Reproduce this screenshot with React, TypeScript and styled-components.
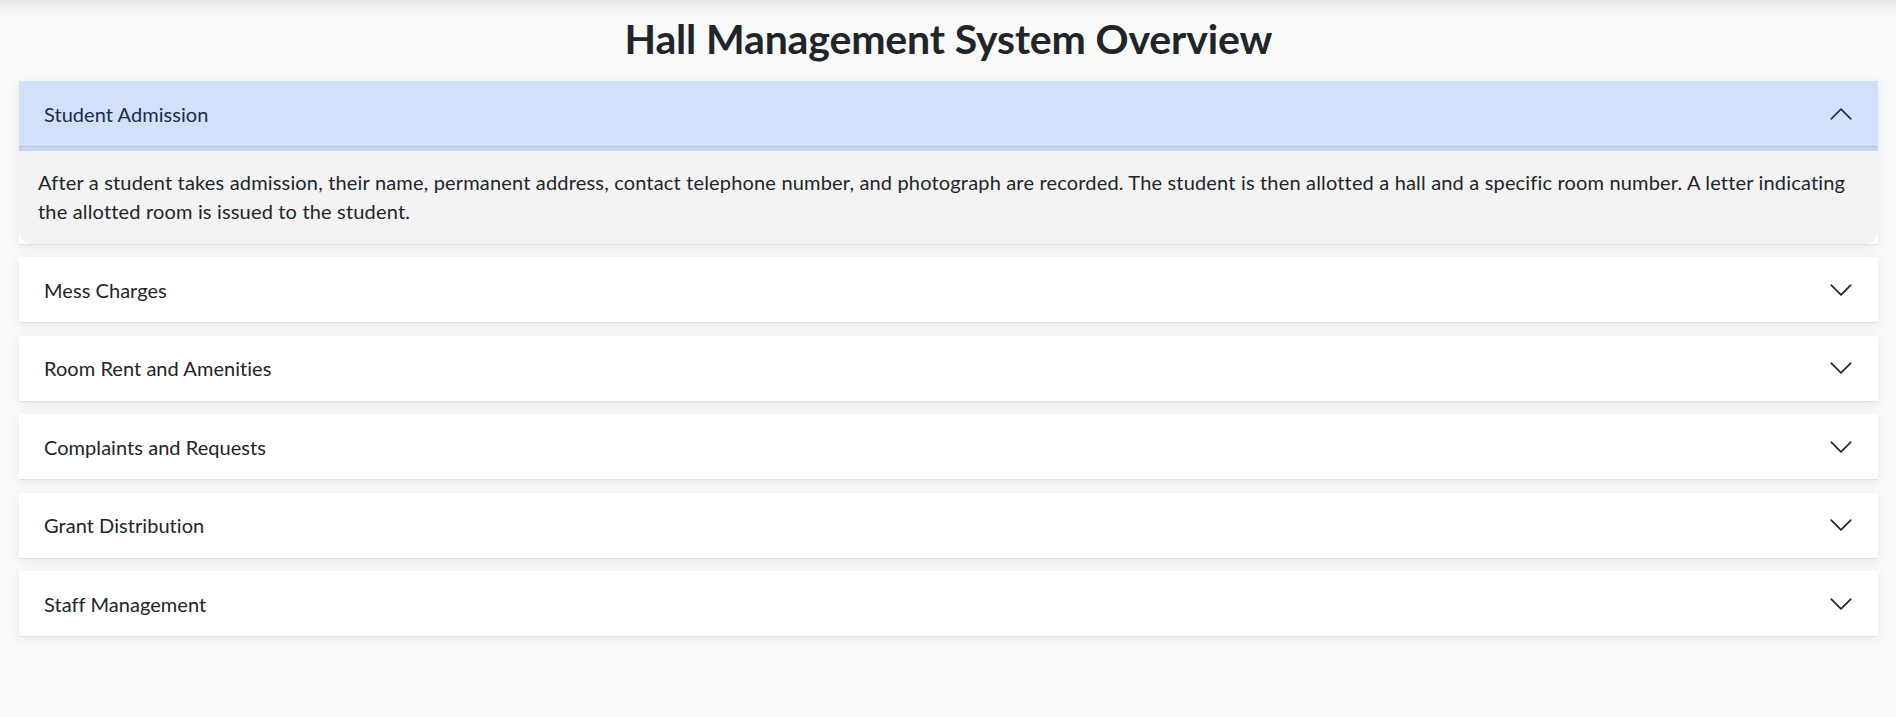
import React, { useState } from "react";
import styled, { createGlobalStyle } from "styled-components";

const GlobalStyle = createGlobalStyle`
  html, body {
    margin: 0;
    padding: 0;
  }
  body {
    min-height: 717px;
    background: linear-gradient(#e2e2e2 0px, #f1f1f1 6px, #f8f9f9 16px) no-repeat, #f8f9f9;
    font-family: "Segoe UI", Lato, "Liberation Sans", sans-serif;
    color: #212529;
  }
  * { box-sizing: border-box; }
`;

const Page = styled.main`
  padding: 0 18.3px 40px 19px;
`;

const Title = styled.h1`
  margin: 0;
  padding: 13px 0 17px;
  text-align: center;
  font-size: 41px;
  line-height: 51px;
  letter-spacing: -0.15px;
  font-weight: 700;
  color: #212529;
`;

const Accordion = styled.div`
  display: flex;
  flex-direction: column;
  gap: 12.5px;
`;

const Item = styled.section`
  background: #ffffff;
  border-bottom: 1px solid #dfe1e4;
  box-shadow: 0 2px 10px rgba(0, 0, 0, 0.07);
`;

const Header = styled.button<{ $open: boolean }>`
  display: flex;
  align-items: center;
  justify-content: space-between;
  width: 100%;
  height: ${(p) => (p.$open ? "66px" : "65px")};
  padding: 0 24px 0 25px;
  border: 0;
  border-bottom: ${(p) => (p.$open ? "1px solid #b3c4e9" : "0")};
  background: ${(p) => (p.$open ? "#d3e0fa" : "#ffffff")};
  color: ${(p) => (p.$open ? "#1a2b50" : "#212529")};
  font-family: inherit;
  font-size: 20px;
  letter-spacing: 0.05px;
  text-align: left;
  cursor: pointer;
`;

const Chevron = styled.svg<{ $open: boolean }>`
  width: 26px;
  height: 26px;
  flex: none;
  transform: ${(p) => (p.$open ? "rotate(180deg)" : "none")};
`;

const Body = styled.div`
  background: #f3f3f3;
  border-top: 4px solid #c6d5f5;
  border-radius: 0 0 13px 13px;
  padding: 17px 19px 17px 19px;
  font-size: 20px;
  line-height: 29.3px;
  letter-spacing: 0.17px;
  color: #212529;
`;

const sections = [
  {
    title: "Student Admission",
    body:
      "After a student takes admission, their name, permanent address, contact telephone number, and photograph are recorded. The student is then allotted a hall and a specific room number. A letter indicating the allotted room is issued to the student.",
  },
  { title: "Mess Charges", body: "" },
  { title: "Room Rent and Amenities", body: "" },
  { title: "Complaints and Requests", body: "" },
  { title: "Grant Distribution", body: "" },
  { title: "Staff Management", body: "" },
];

export default function App() {
  const [open, setOpen] = useState<number>(0);
  return (
    <>
      <GlobalStyle />
      <Page>
        <Title>Hall Management System Overview</Title>
        <Accordion>
          {sections.map((s, i) => {
            const isOpen = open === i;
            return (
              <Item key={s.title}>
                <Header $open={isOpen} onClick={() => setOpen(isOpen ? -1 : i)}>
                  <span>{s.title}</span>
                  <Chevron
                    $open={isOpen}
                    viewBox="0 0 16 16"
                    fill="none"
                    stroke={isOpen ? "#1a2f5e" : "#212529"}
                    strokeLinecap="round"
                    strokeLinejoin="round"
                  >
                    <path d="M2 5L8 11L14 5" />
                  </Chevron>
                </Header>
                {isOpen && <Body>{s.body}</Body>}
              </Item>
            );
          })}
        </Accordion>
      </Page>
    </>
  );
}
